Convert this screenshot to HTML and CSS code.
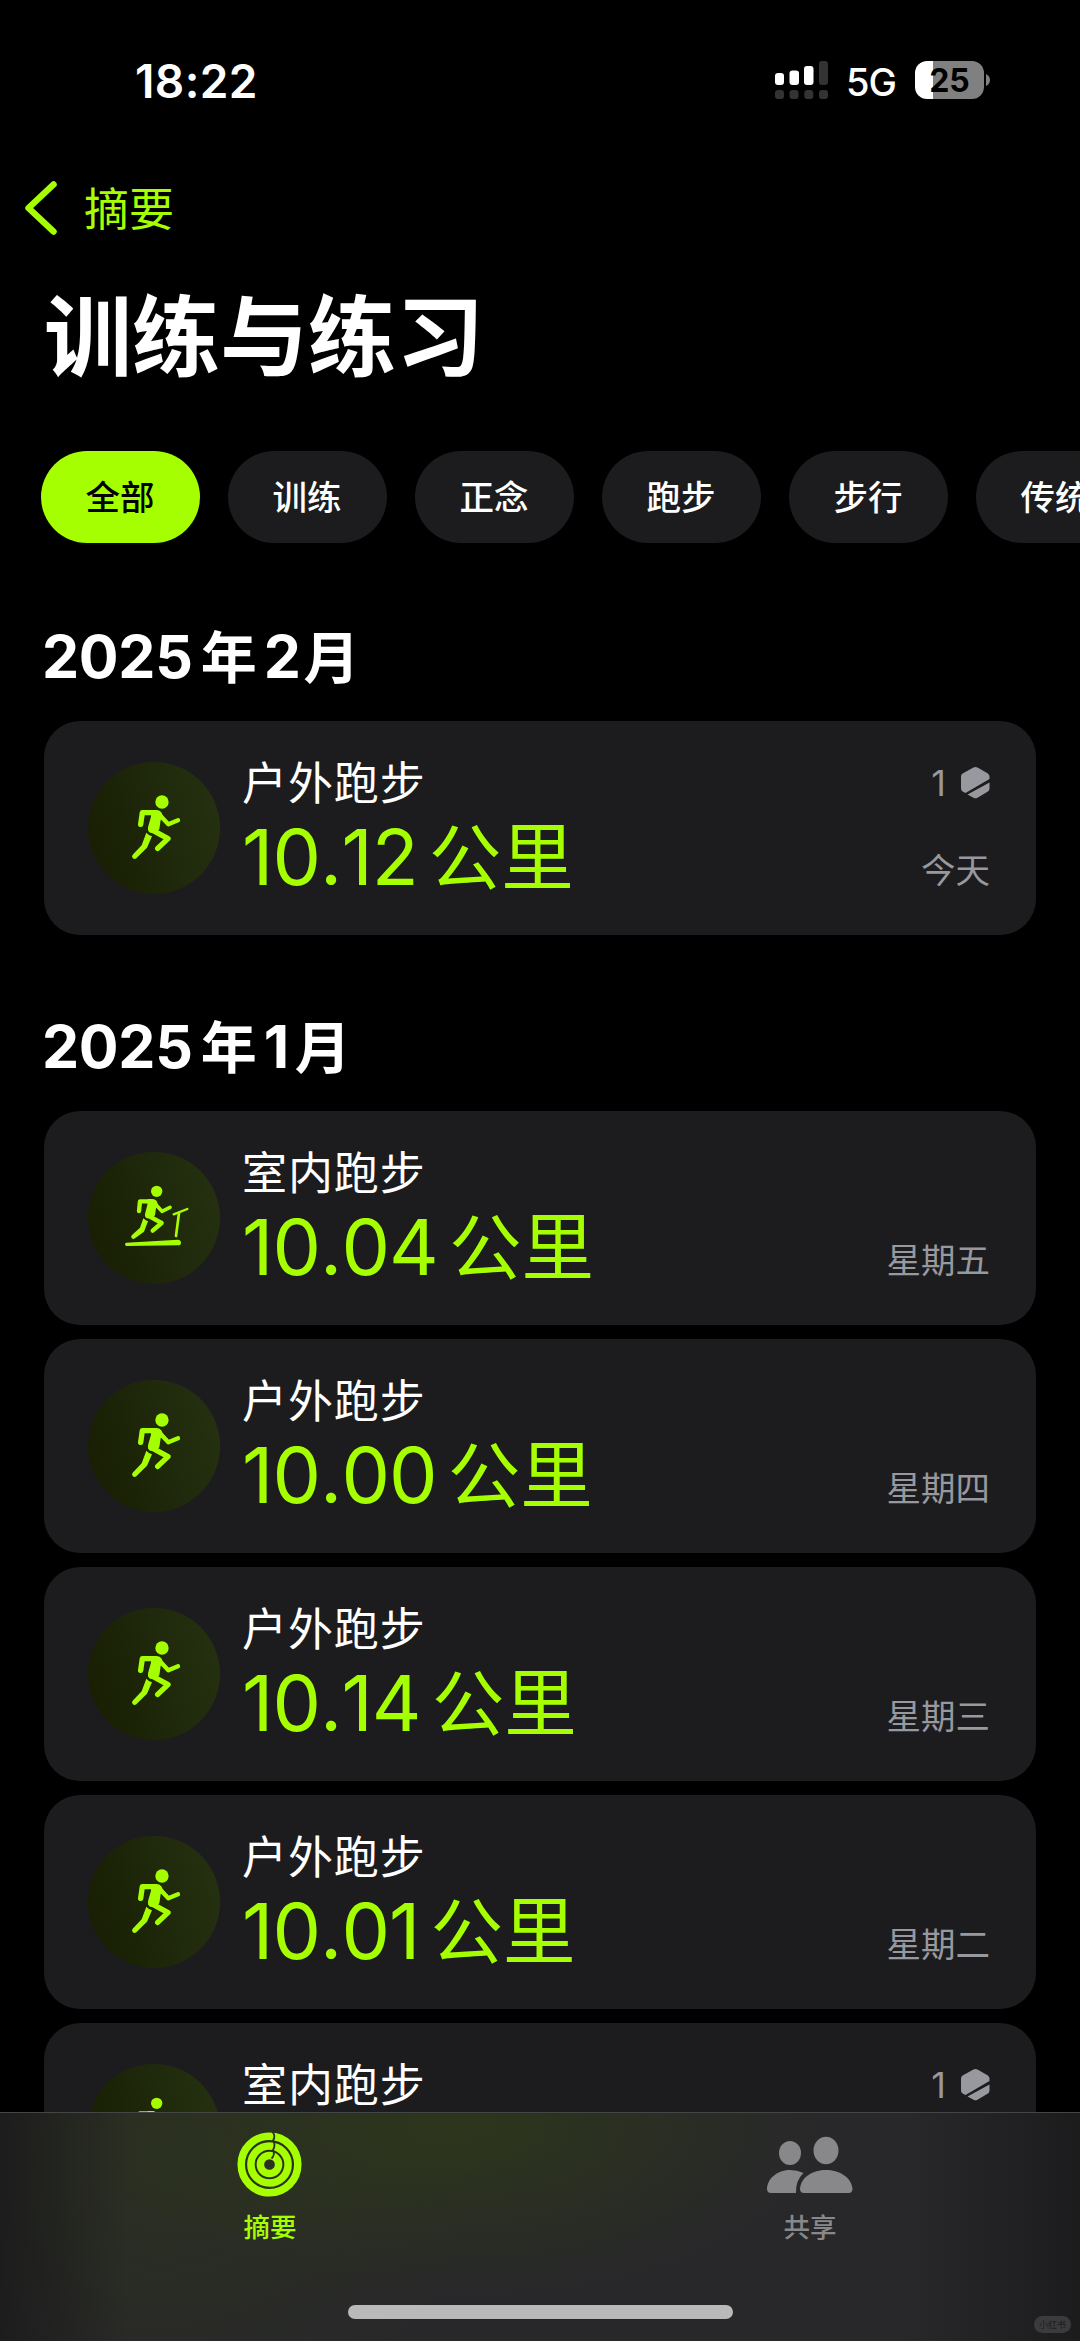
FILE: index.html
```html
<!DOCTYPE html>
<html lang="zh-CN">
<head>
<meta charset="utf-8">
<title>训练与练习</title>
<link rel="stylesheet" href="styles.css">
</head>
<body>
<svg class="defs" width="0" height="0" aria-hidden="true">
  <symbol id="run" viewBox="24 36 396 396">
    <circle cx="246" cy="156" r="20" fill="currentColor"/>
    <path d="M213 180h16q9 0 15 7l5 12-7 12-4 27-10 10-18 0q-9-6-5-20l8-28z" fill="currentColor"/>
    <g fill="none" stroke="currentColor" stroke-width="16" stroke-linecap="round" stroke-linejoin="round">
      <path d="M182 223l5-35h38"/>
      <path d="M237 193l28 30 29-12" stroke-width="13"/>
      <path d="M213 238l51 28-31 29"/>
    </g>
    <path d="M199 248q7 8 17 11l-15 34-32 32q-6 4-11-1-4-5 0-10l27-28z" fill="currentColor"/>
  </symbol>
  <symbol id="treadmill" viewBox="24 36 396 396">
    <circle cx="230" cy="154" r="17" fill="currentColor"/>
    <path d="M203 177h14q8 0 13 6l4 11-6 11-3 21-9 9-15 0q-9-5-5-17l6-24z" fill="currentColor"/>
    <g fill="none" stroke="currentColor" stroke-width="13" stroke-linecap="round" stroke-linejoin="round">
      <path d="M177 213l3-29h30"/>
      <path d="M223 189l23 25 24-12" stroke-width="11"/>
      <path d="M204 227l41 22-27 23"/>
      <path d="M281 223l41-16" stroke-width="7"/>
      <path d="M297 219l-9 69" stroke-width="8"/>
    </g>
    <path d="M190 235q6 6 14 9l-12 31-27 20q-6 4-10-1-4-5 1-9l24-22z" fill="currentColor"/>
    <path d="M139 308l155-9q9 1 9 9 0 8-9 8l-155 2q-4-1-4-5t4-5z" fill="currentColor"/>
  </symbol>
  <symbol id="badge" viewBox="0 0 29 32">
    <path d="M12.500.5q2-1 4 0l10 5.700q2 1.200 2 3.300v2.500L4.500 26 2 24.700q-2-1-2-3.200V9.500q0-2.200 2-3.300z" fill="currentColor"/>
    <path d="M28.500 15.500v6q0 2.200-2 3.300l-10 5.900q-2 1-4 0l-6-3.200z" fill="currentColor"/>
  </symbol>
</svg>

<div class="screen">
  <header class="status">
    <span class="time">18:22</span>
    <div class="indicators">
      <svg class="signal" width="54" height="39" viewBox="0 0 54 39">
        <g fill="#fff"><rect y="12" width="9" height="12" rx="3"/><rect x="14.500" y="9.500" width="9.500" height="14.500" rx="3"/><rect x="29" y="5" width="9.500" height="19" rx="3"/></g>
        <g fill="#333"><rect x="44" y="0" width="9" height="24" rx="3"/><rect y="29" width="9" height="9" rx="3"/><rect x="14.500" y="29" width="9" height="9" rx="3"/><rect x="29.300" y="29" width="9" height="9" rx="3"/><rect x="44" y="29" width="9" height="9" rx="3"/></g>
      </svg>
      <span class="network">5G</span>
      <div class="battery"><span class="level">25</span><svg width="4" height="12" viewBox="0 0 4 12"><path d="M0 0q4 2 4 6t-4 6z" fill="#808080"/></svg></div>
    </div>
  </header>

  <main class="content">
    <a class="back">
      <svg width="32" height="54" viewBox="0 0 32 54"><path d="M28.500 3.500L3.500 27l25 23.500" fill="none" stroke="currentColor" stroke-width="6.500" stroke-linecap="round" stroke-linejoin="round"/></svg>
      <span>摘要</span>
    </a>
    <h1>训练与练习</h1>
    <nav class="chips">
      <span class="chip active">全部</span><span class="chip">训练</span><span class="chip">正念</span><span class="chip">跑步</span><span class="chip">步行</span><span class="chip">传统</span>
    </nav>

    <h2><span>2025</span><span class="cjk year">年</span><span>2</span><span class="cjk month">月</span></h2>
    <section class="list">
      <article class="card">
        <div class="disc"><svg><use href="#run"/></svg></div>
        <div class="info"><div class="name">户外跑步</div><div class="value"><span>10.12</span><span class="unit">公里</span></div></div>
        <div class="meta"><div class="award">1<svg><use href="#badge"/></svg></div><div class="day">今天</div></div>
      </article>
    </section>

    <h2 class="next"><span>2025</span><span class="cjk year">年</span><span>1</span><span class="cjk month">月</span></h2>
    <section class="list">
      <article class="card">
        <div class="disc"><svg><use href="#treadmill"/></svg></div>
        <div class="info"><div class="name">室内跑步</div><div class="value"><span>10.04</span><span class="unit">公里</span></div></div>
        <div class="meta"><div class="day">星期五</div></div>
      </article>
      <article class="card">
        <div class="disc"><svg><use href="#run"/></svg></div>
        <div class="info"><div class="name">户外跑步</div><div class="value"><span>10.00</span><span class="unit">公里</span></div></div>
        <div class="meta"><div class="day">星期四</div></div>
      </article>
      <article class="card">
        <div class="disc"><svg><use href="#run"/></svg></div>
        <div class="info"><div class="name">户外跑步</div><div class="value"><span>10.14</span><span class="unit">公里</span></div></div>
        <div class="meta"><div class="day">星期三</div></div>
      </article>
      <article class="card">
        <div class="disc"><svg><use href="#run"/></svg></div>
        <div class="info"><div class="name">户外跑步</div><div class="value"><span>10.01</span><span class="unit">公里</span></div></div>
        <div class="meta"><div class="day">星期二</div></div>
      </article>
      <article class="card">
        <div class="disc"><svg><use href="#treadmill"/></svg></div>
        <div class="info"><div class="name">室内跑步</div></div>
        <div class="meta"><div class="award">1<svg><use href="#badge"/></svg></div></div>
      </article>
    </section>
  </main>

  <footer class="tabbar">
    <div class="tabs">
      <div class="tab active">
        <svg width="66" height="66" viewBox="0 0 66 66">
          <g fill="none" stroke="currentColor" stroke-width="7.500"><circle cx="32.500" cy="33.500" r="28.300"/><circle cx="32.500" cy="33.500" r="18.600"/><circle cx="32.500" cy="33.500" r="9.100"/></g>
          <path d="M35.500 1q3.500 4 .5 8.500 3 4.500 0 9.500 2.500 4.500-1.500 8.500" fill="none" stroke="#2b3020" stroke-width="1.800"/>
        </svg>
        <span>摘要</span>
      </div>
      <div class="tab">
        <svg width="86" height="66" viewBox="0 0 86 66">
          <g fill="currentColor"><ellipse cx="23" cy="22" rx="11" ry="12"/><ellipse cx="59" cy="19.500" rx="12.500" ry="13.800"/>
          <path d="M36.500 42Q28.500 49.500 29 62H4q-4 0-4-4.500C1 46 12 39 23 39q7 0 13.500 3z"/>
          <path d="M37 62q-4 0-4-4.500C34 46 46 39 59 39s25 7 26.500 18.500q0 4.500-4 4.500z"/></g>
        </svg>
        <span>共享</span>
      </div>
    </div>
    <div class="home"></div>
    <span class="mark">小红书</span>
  </footer>
</div>
</body>
</html>
```

FILE: styles.css
```css
* { box-sizing: border-box; }
body { margin: 0; background: #000; color: #fff; font-family: Inter, "Noto Sans CJK SC", sans-serif; }
.defs { display: block; height: 0; }
svg { display: block; flex: none; }

.screen { display: flex; flex-direction: column; width: 1080px; height: 2341px; overflow: hidden; }

.status { display: flex; flex: none; align-items: center; justify-content: space-between; height: 160px; padding: 0 90px 0 135px; }
.time { font-size: 46px; font-weight: 600; line-height: 60px; letter-spacing: 0.4px; padding-top: 1px; }
.indicators { display: flex; align-items: center; }
.network { width: 68px; padding-left: 17px; font-size: 38px; font-weight: 500; line-height: 50px; margin-top: 3px; letter-spacing: -1px; }
.battery { display: flex; align-items: center; gap: 2px; margin-left: 18px; }
.level { width: 69px; height: 38px; border-radius: 12px; background: linear-gradient(90deg, #fff 18px, #808080 18px); color: #000; font-size: 32px; font-weight: 700; line-height: 39px; text-align: center; }

.content { flex: 1; min-height: 0; overflow: hidden; }
.back { display: flex; align-items: center; gap: 27px; height: 96px; padding-left: 25px; color: #a6ff00; font-size: 45px; line-height: 60px; }
.back span { padding-top: 3px; }
h1 { margin: 29px 0 0 44px; font-size: 88px; line-height: 104px; font-weight: 700; }
.chips { display: flex; gap: 28px; margin: 62px 0 0 41px; overflow: hidden; }
.chip { flex: none; height: 92px; padding: 0 45.500px 0 44.500px; border-radius: 46px; background: #1c1c1e; font-size: 34.500px; font-weight: 500; line-height: 94px; }
.chip.active { background: #a6ff00; color: #000; }

h2 { display: flex; align-items: center; margin: 84px 0 34px 42px; height: 60px; font-size: 59px; line-height: 60px; font-weight: 700; letter-spacing: -0.3px; }
h2.next { margin-top: 82px; }
.cjk { font-size: 56px; padding-top: 2px; letter-spacing: 0; }
.year { margin: 0 7px 0 8px; }
.month { margin-left: 3px; }
.next .month { margin-left: 6px; }

.list { display: flex; flex-direction: column; gap: 14px; margin: 0 44px; }
.card { display: flex; height: 214px; padding: 41px 46px 0 44px; border-radius: 36px; background: #1c1c1e; }
.disc { flex: none; width: 132px; height: 132px; border-radius: 50%; background: linear-gradient(75deg, #171d02, #263212); color: #a6ff00; }
.disc svg { width: 132px; height: 132px; }
.info { flex: 1; margin-left: 22px; }
.name { height: 44px; font-size: 45px; line-height: 44px; letter-spacing: 0.9px; }
.value { display: flex; align-items: center; gap: 11px; height: 101px; color: #a6ff00; font-size: 77px; line-height: 100px; font-kerning: none; letter-spacing: -0.9px; white-space: nowrap; }
.unit { font-size: 72.500px; padding-top: 2px; letter-spacing: 0; }
.meta { display: flex; flex-direction: column; width: 160px; align-items: flex-end; color: #98989f; font-size: 34.500px; }
.award { display: flex; align-items: center; gap: 15px; height: 42px; font-size: 36px; }
.award svg { width: 29px; height: 32px; }
.day { margin-top: auto; margin-bottom: 40px; height: 48px; line-height: 48px; }

.tabbar { position: relative; flex: none; height: 229px; border-top: 1px solid #454546; color: #88888a;
  background:
    linear-gradient(90deg, rgba(24,24,25,.75), transparent 12%, transparent 84%, rgba(24,24,25,.75)),
    radial-gradient(ellipse 360px 170px at 460px 10px, rgba(46,58,22,.75), transparent),
    radial-gradient(ellipse 320px 260px at 160px 50px, rgba(44,50,30,.75), transparent),
    #28282a; }
.tabs { display: flex; }
.tab { display: flex; flex: 1; flex-direction: column; align-items: center; padding-top: 18px; font-size: 26.500px; font-weight: 500; line-height: 36px; }
.tab span { margin-top: 12px; }
.tab.active { color: #a6ff00; }
.home { width: 385px; height: 14px; margin: 60px auto 0; border-radius: 7px; background: #bababa; }
.mark { position: absolute; right: 9px; bottom: 8px; width: 37px; height: 17px; border-radius: 9px; background: #3b3b3d; color: #1d1d1e; font-size: 9px; line-height: 17px; text-align: center; }
```
